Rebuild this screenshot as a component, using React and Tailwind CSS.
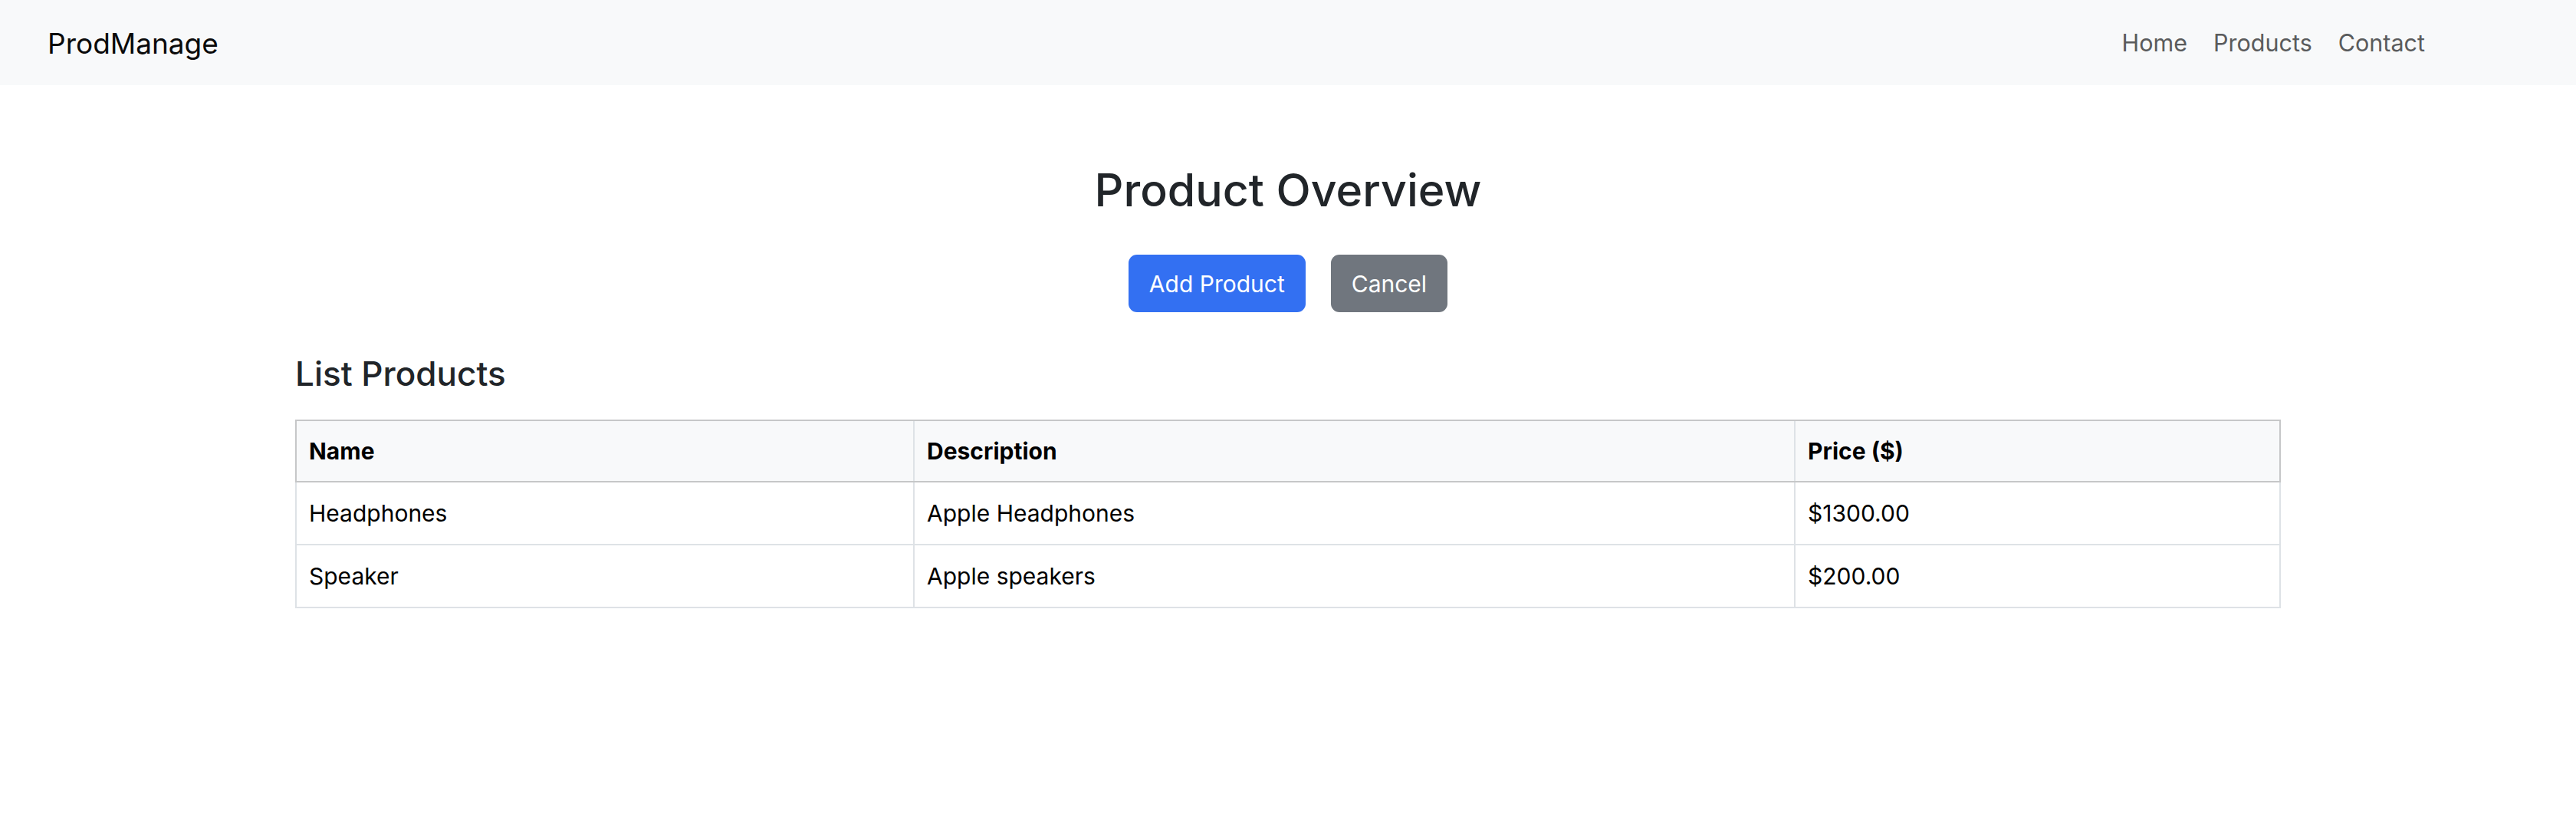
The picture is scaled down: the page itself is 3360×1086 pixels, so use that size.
export default function App() {
  const rows = [
    { name: "Headphones", desc: "Apple Headphones", price: "$1300.00" },
    { name: "Speaker", desc: "Apple speakers", price: "$200.00" },
  ];
  return (
    <div className="min-h-screen bg-white font-['Inter','Noto_Sans',sans-serif]">
      <nav className="h-[111px] bg-[#f8f9fa] flex items-center justify-between pl-[62px] pr-[180px] pt-[2px]">
        <span className="text-[37px] leading-none text-[#0a0a0a]">ProdManage</span>
        <ul className="flex">
          <li><a className="block px-[17px] text-[30.5px] leading-none text-[#5a5b5c]">Home</a></li>
          <li><a className="block px-[17px] text-[30.5px] leading-none text-[#5a5b5c]">Products</a></li>
          <li><a className="block px-[17px] text-[30.5px] leading-none text-[#5a5b5c]">Contact</a></li>
        </ul>
      </nav>

      <div className="flex flex-col items-center pt-[107px]">
        <h2 className="text-[59px] leading-none font-medium text-[#212529]">Product Overview</h2>
        <div className="flex gap-[33px] mt-[55px]">
          <button className="h-[75px] px-[27px] rounded-[11px] bg-[#3370f2] text-white text-[30px] leading-none">Add Product</button>
          <button className="h-[75px] px-[27px] rounded-[11px] bg-[#70767e] text-white text-[30px] leading-none">Cancel</button>
        </div>
      </div>

      <div className="mx-[385px]">
        <h4 className="mt-[58px] text-[44px] leading-none font-medium text-[#212529]">List Products</h4>
        <div className="mt-[38px] text-black text-[30px]">
          <div className="grid grid-cols-[804px_1149px_1fr] h-[82px] border-2 border-[#c6c7c8] bg-[#f8f9fa] font-bold">
            <div className="flex items-center pl-[16px]">Name</div>
            <div className="flex items-center pl-[16px] border-l-2 border-[#dee2e6]">Description</div>
            <div className="flex items-center pl-[16px] border-l-2 border-[#dee2e6]">Price ($)</div>
          </div>
          {rows.map((r) => (
            <div key={r.name} className="grid grid-cols-[804px_1149px_1fr] h-[82px] border-x-2 border-b-2 border-[#dee2e6]">
              <div className="flex items-center pl-[16px]">{r.name}</div>
              <div className="flex items-center pl-[16px] border-l-2 border-[#dee2e6]">{r.desc}</div>
              <div className="flex items-center pl-[16px] border-l-2 border-[#dee2e6]">{r.price}</div>
            </div>
          ))}
        </div>
      </div>
    </div>
  );
}
